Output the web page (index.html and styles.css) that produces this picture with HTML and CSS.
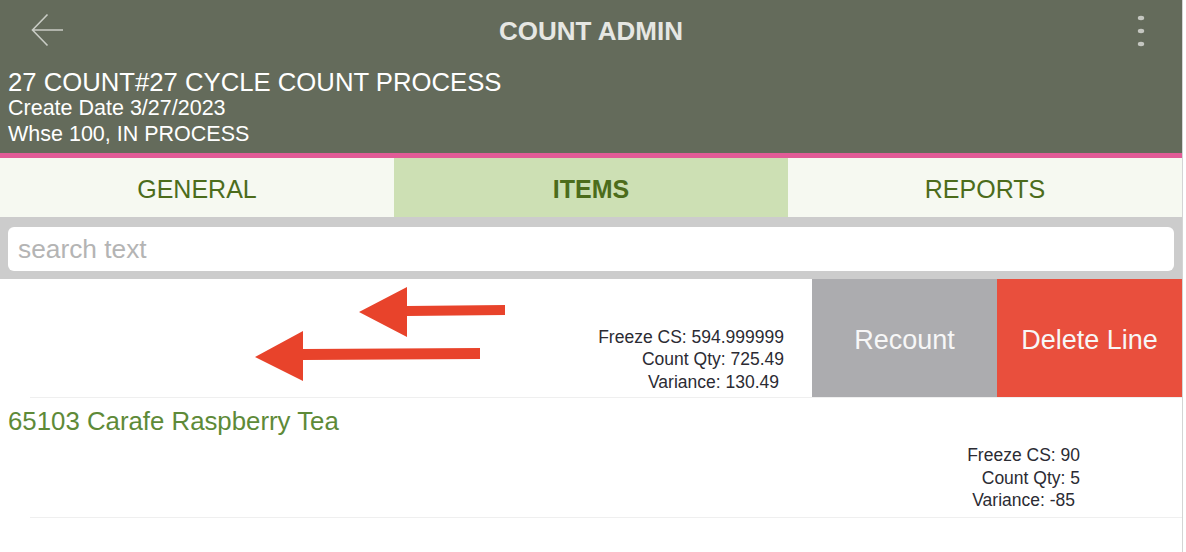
FILE: index.html
```html
<!DOCTYPE html>
<html lang="en">

<head>
    <meta charset="UTF-8">
    <meta name="viewport" content="width=device-width, initial-scale=1.0">
    <title>Count Admin</title>
    <link rel="stylesheet" href="styles.css">
</head>

<body>

    <div class="app">
        <header class="header">
            <div class="navbar">
                <svg class="back-icon" width="34" height="36" viewBox="0 0 34 36">
                    <path d="M32 18H1.5M16.5 2.5L1.5 18l15 15.5" fill="none" stroke="#c9ccc5" stroke-width="1.6" />
                </svg>
                <h1 class="nav-title">COUNT ADMIN</h1>
                <svg class="menu-icon" width="8" height="32" viewBox="0 0 8 32">
                    <ellipse cx="4" cy="3" rx="3.2" ry="2.2" fill="#c4c6c0" />
                    <ellipse cx="4" cy="16" rx="3.2" ry="2.2" fill="#c4c6c0" />
                    <ellipse cx="4" cy="29" rx="3.2" ry="2.2" fill="#c4c6c0" />
                </svg>
            </div>
            <div class="count-info">
                <div class="count-name">27 COUNT#27 CYCLE COUNT PROCESS</div>
                <div class="count-line">Create Date 3/27/2023</div>
                <div class="count-line">Whse 100, IN PROCESS</div>
            </div>
        </header>

        <nav class="tabs">
            <div class="tab">GENERAL</div>
            <div class="tab active">ITEMS</div>
            <div class="tab">REPORTS</div>
        </nav>

        <div class="search-bar">
            <input type="text" class="search-input" placeholder="search text">
        </div>

        <div class="item-list">
            <!-- swiped row, actions showing -->
            <div class="item-row swiped">
                <div class="item-main">
                    <div class="item-stats">
                        <div>Freeze CS: 594.999999</div>
                        <div>Count Qty: 725.49</div>
                        <div class="stat-variance">Variance: 130.49</div>
                    </div>
                    <svg class="hint-arrows" width="812" height="118" viewBox="0 0 812 118">
                        <polygon points="359,33 407,8 407,27 505,26 505,36 407,37 407,58" fill="#e8432b" />
                        <polygon points="255,78 303,52 303,70 480,69 480,80 303,81 303,102" fill="#e8432b" />
                    </svg>
                </div>
                <div class="row-actions">
                    <button class="action recount">Recount</button>
                    <button class="action delete">Delete Line</button>
                </div>
            </div>

            <div class="item-row">
                <div class="item-main">
                    <div class="item-title">65103 Carafe Raspberry Tea</div>
                    <div class="item-stats wide">
                        <div>Freeze CS: 90</div>
                        <div>Count Qty: 5</div>
                        <div class="stat-variance">Variance: -85</div>
                    </div>
                </div>
            </div>
        </div>
    </div>

</body>

</html>
```

FILE: styles.css
```css
body {
    margin: 0;
    background: #fff;
    font-family: 'Liberation Sans', Arial, Helvetica, sans-serif;
}

.app {
    width: 1182px;
    min-height: 552px;
    border-right: 1px solid #d4d4d4;
}

/* header */
.header {
    background: #646b5b;
    border-bottom: 5px solid #e25b97;
    color: #fff;
}

.navbar {
    height: 62px;
    display: grid;
    grid-template-columns: 1fr auto 1fr;
    align-items: center;
}

.back-icon {
    margin-left: 31px;
    margin-top: -2px;
}

.nav-title {
    margin: 0;
    font-size: 26px;
    font-weight: bold;
    color: #e6e7e3;
}

.menu-icon {
    justify-self: end;
    margin-right: 37px;
    margin-top: -1px;
}

.count-info {
    padding: 6px 8px 6px;
}

.count-name {
    font-size: 25.7px;
    line-height: 28px;
}

.count-line {
    font-size: 21.5px;
    line-height: 25.5px;
}

/* tabs */
.tabs {
    display: flex;
}

.tab {
    flex: 1;
    height: 55px;
    padding-top: 4px;
    display: flex;
    align-items: center;
    justify-content: center;
    background: #f6f9f1;
    color: #4c6c1b;
    font-size: 25px;
}

.tab.active {
    background: #cde0b4;
    font-weight: bold;
}

/* search */
.search-bar {
    background: #cccccc;
    padding: 10px 8px 8px;
}

.search-input {
    display: block;
    width: 100%;
    height: 44px;
    box-sizing: border-box;
    border: none;
    border-radius: 6px;
    padding: 0 10px;
    font-family: inherit;
    font-size: 26.3px;
    outline: none;
}

.search-input::placeholder {
    color: #b4b4b4;
}

/* item rows */
.item-row {
    display: flex;
    position: relative;
    background: linear-gradient(#efefef, #efefef) no-repeat 30px 100% / calc(100% - 30px) 1px;
}

.item-main {
    flex: 1;
    display: flex;
    flex-direction: column;
}

.swiped {
    height: 119px;
}

.swiped .item-main {
    justify-content: flex-end;
    padding: 0 28px 5px 0;
}

.item-title {
    padding: 8px 0 0 8px;
    font-size: 25.8px;
    line-height: 30px;
    color: #5e8a38;
}

.item-stats {
    align-self: flex-end;
    text-align: right;
    font-size: 17.5px;
    line-height: 22.5px;
    color: #2b2b33;
}

.item-stats.wide {
    margin: 8px 102px 6px 0;
}

.stat-variance {
    margin-right: 5px;
}

.hint-arrows {
    position: absolute;
    left: 0;
    top: 0;
    pointer-events: none;
}

.row-actions {
    display: flex;
    height: 118px;
}

.action {
    width: 185px;
    height: 100%;
    border: none;
    padding: 4px 0 0;
    color: #f7f7f7;
    font-family: inherit;
    font-size: 27px;
    cursor: pointer;
}

.recount {
    background: #acacaf;
}

.delete {
    background: #e94f3d;
}
```
